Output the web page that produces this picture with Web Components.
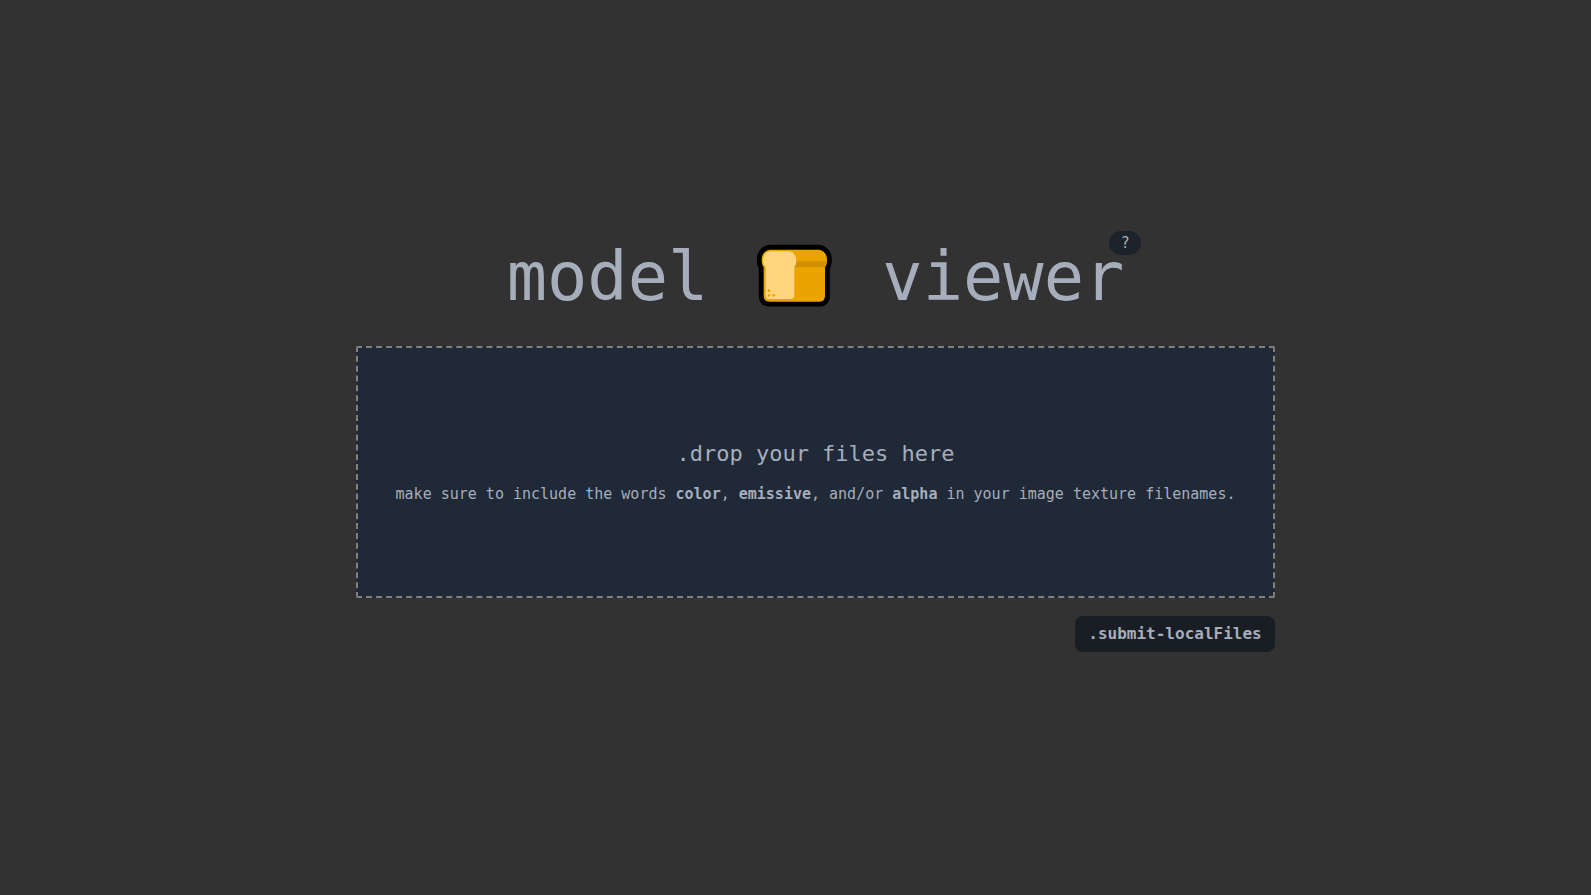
<!DOCTYPE html>
<html lang="en">
<head>
<meta charset="utf-8">
<meta name="viewport" content="width=device-width, initial-scale=1">
<title>model viewer</title>
<style>
  body { margin: 0; background: #323232; color: #a6adbb; font-family: "DejaVu Sans Mono", "Liberation Mono", monospace; }
</style>
</head>
<body>
<viewer-app></viewer-app>
<script>
const define = (name, html) => customElements.define(name, class extends HTMLElement {
  constructor() {
    super();
    this.attachShadow({ mode: 'open' }).innerHTML = html;
  }
});

define('bread-icon', `
  <style>
    :host { display: block; width: 94px; height: 66px; }
    svg { display: block; width: 100%; height: 100%; }
  </style>
  <svg viewBox="11 35 282 198" aria-hidden="true">
    <path d="M80 52H220C238 52 248 66 248 82C248 93 246 99 242 105V191Q242 208 225 208H75Q58 208 58 191V105C54 99 52 93 52 82C52 66 62 52 80 52Z" fill="#000" stroke="#000" stroke-width="29" stroke-linejoin="round"/>
    <path d="M80 52H220C238 52 248 66 248 82C248 93 246 99 242 105V191Q242 208 225 208H75Q58 208 58 191V105C54 99 52 93 52 82C52 66 62 52 80 52Z" fill="#eba300"/>
    <path d="M148 87H248Q247 97 242 105H148Z" fill="#d28f00"/>
    <path d="M82 57H130C148 57 156 70 156 84C156 94 154 99 150 104V188Q150 200 138 200H74Q64 200 64 190V104C58 99 56 94 56 84C56 70 64 57 82 57Z" fill="#ffd67d"/>
    <g fill="#eba300"><circle cx="74" cy="175" r="4"/><circle cx="74" cy="189" r="4"/><circle cx="88" cy="189" r="4"/></g>
  </svg>`);

define('help-badge', `
  <style>
    :host { display: block; }
    button { display: block; width: 32px; height: 24px; padding: 0; border: 0; border-radius: 12px; background: #1d232a; color: inherit; font: 15px/22px "DejaVu Sans Mono", monospace; cursor: pointer; }
  </style>
  <button type="button" aria-label="Help"><slot></slot></button>`);

define('app-title', `
  <style>
    :host { display: block; position: relative; }
    h1 { display: flex; gap: 40px; margin: 0; font-size: 67px; line-height: 66px; font-weight: 400; }
    help-badge { position: absolute; right: -17px; top: -13px; }
  </style>
  <h1><span>model</span><bread-icon></bread-icon><span>viewer</span></h1>
  <help-badge>?</help-badge>`);

define('drop-zone', `
  <style>
    :host { display: block; width: 100%; position: relative; }
    label { box-sizing: border-box; min-height: 252px; display: flex; flex-direction: column; align-items: center; justify-content: center; gap: 12px; padding: 24px; text-align: center; border: 2px dashed #808080; border-radius: 2px; background: #1f2937; cursor: pointer; }
    input { position: absolute; width: 1px; height: 1px; opacity: 0; }
    .lead { font-size: 22px; line-height: 32px; }
    .hint { font-size: 15px; line-height: 24px; }
  </style>
  <input id="files" type="file" multiple>
  <label for="files">
    <span class="lead">.drop your files here</span>
    <span class="hint"><slot></slot></span>
  </label>`);

define('submit-button', `
  <style>
    :host { display: block; }
    button { display: block; height: 36px; min-width: 200px; padding: 0 12px; border: 0; border-radius: 8px; background: #191e24; color: inherit; font: bold 16px/24px "DejaVu Sans Mono", monospace; cursor: pointer; }
  </style>
  <button type="submit"><slot></slot></button>`);

define('viewer-app', `
  <style>
    :host { display: flex; box-sizing: border-box; min-height: 100vh; padding-left: 40px; align-items: center; justify-content: center; }
    main { width: 100%; max-width: 919px; display: flex; flex-direction: column; align-items: center; }
    drop-zone { margin: 36px 0 18px; }
    submit-button { align-self: flex-end; }
  </style>
  <main>
    <app-title></app-title>
    <drop-zone>make sure to include the words <b>color</b>, <b>emissive</b>, and/or <b>alpha</b> in your image texture filenames.</drop-zone>
    <submit-button>.submit-localFiles</submit-button>
  </main>`);
</script>
</body>
</html>
